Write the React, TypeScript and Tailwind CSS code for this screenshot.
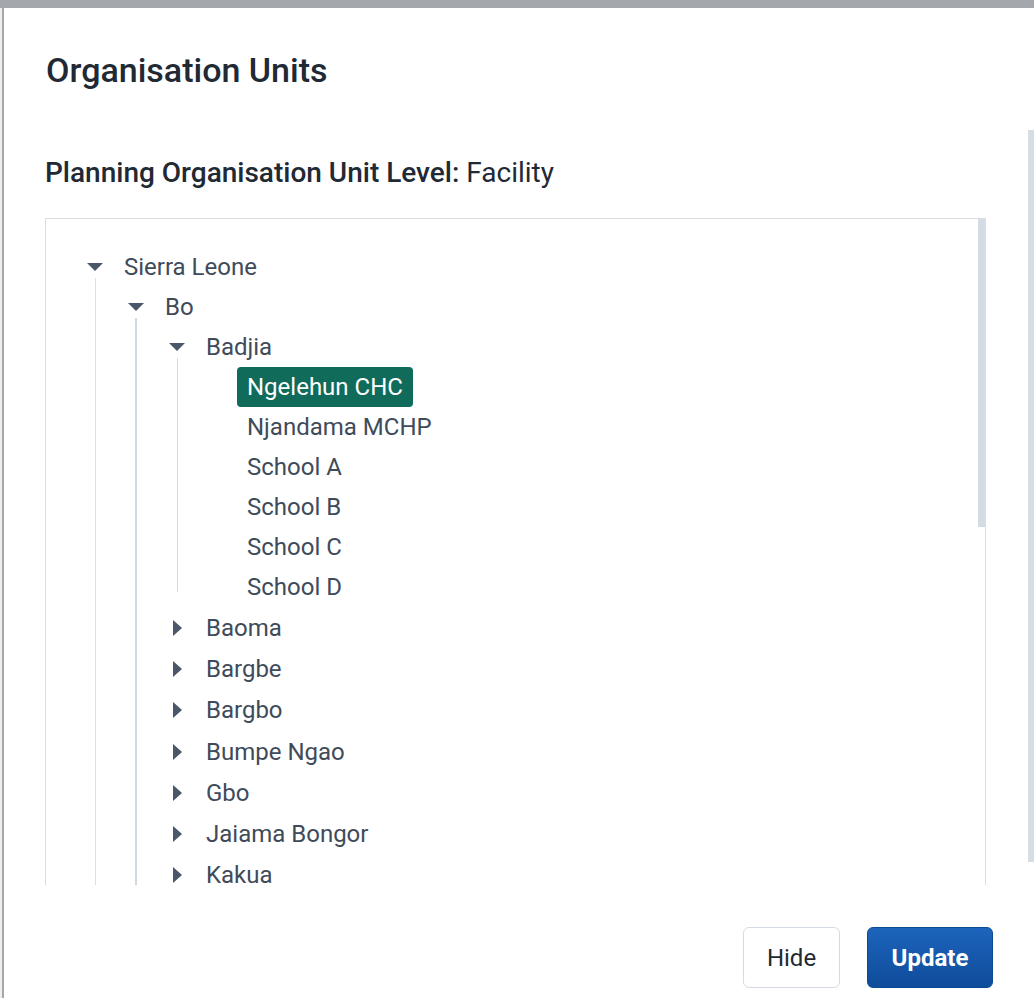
import React from "react";

type N = {
  label: string;
  open?: boolean;
  leaf?: boolean;
  selected?: boolean;
  line?: "a" | "b" | "c";
  children?: N[];
};

const tree: N = {
  label: "Sierra Leone",
  open: true,
  line: "a",
  children: [
    {
      label: "Bo",
      open: true,
      line: "b",
      children: [
        {
          label: "Badjia",
          open: true,
          line: "c",
          children: [
            { label: "Ngelehun CHC", leaf: true, selected: true },
            { label: "Njandama MCHP", leaf: true },
            { label: "School A", leaf: true },
            { label: "School B", leaf: true },
            { label: "School C", leaf: true },
            { label: "School D", leaf: true },
          ],
        },
        { label: "Baoma" },
        { label: "Bargbe" },
        { label: "Bargbo" },
        { label: "Bumpe Ngao" },
        { label: "Gbo" },
        { label: "Jaiama Bongor" },
        { label: "Kakua" },
      ],
    },
  ],
};

function Down() {
  return (
    <svg width="16" height="8" viewBox="0 0 16 8" className="block">
      <path d="M0 0 L16 0 L8 8 Z" fill="#4a5768" />
    </svg>
  );
}

function Right() {
  return (
    <svg width="9" height="16" viewBox="0 0 9 16" className="block">
      <path d="M0 0 L9 8 L0 16 Z" fill="#4a5768" />
    </svg>
  );
}

function Line({ kind }: { kind?: "a" | "b" | "c" }) {
  if (kind === "a") return <div className="mt-[7px] w-px flex-1 bg-[#d9e0e7]" />;
  if (kind === "b") return <div className="mt-[7px] w-[2px] flex-1 bg-[#d0d9e3]" />;
  return <div className="mt-[7px] mb-[15px] w-px flex-1 bg-[#d5dbe2]" />;
}

function Label({ node }: { node: N }) {
  if (node.selected) {
    return (
      <span className="ml-[7px] flex h-[40px] items-center rounded-[4px] bg-[#106b5a] px-[10px] text-[24px] text-white">
        {node.label}
      </span>
    );
  }
  return (
    <span className="ml-[7px] flex items-center px-[10px] text-[24px] text-[#404b5a]">
      {node.label}
    </span>
  );
}

function TreeNode({ node }: { node: N }) {
  if (node.open) {
    return (
      <div className="flex">
        <div className="flex w-[24px] shrink-0 flex-col items-center pt-[16px]">
          <Down />
          <Line kind={node.line} />
        </div>
        <div className="flex flex-col">
          <div className="flex h-[40px] items-center">
            <Label node={node} />
          </div>
          <div className="ml-[17px] flex flex-col">
            {node.children?.map((c) => (
              <TreeNode key={c.label} node={c} />
            ))}
          </div>
        </div>
      </div>
    );
  }
  if (node.leaf) {
    return (
      <div className="flex h-[40px] items-center">
        <div className="w-[24px] shrink-0" />
        <Label node={node} />
      </div>
    );
  }
  return (
    <div className="flex h-[41.3px] items-center">
      <div className="flex w-[24px] shrink-0 justify-center">
        <Right />
      </div>
      <Label node={node} />
    </div>
  );
}

export default function App() {
  return (
    <div
      className="flex h-[998px] w-[1034px] flex-col overflow-hidden bg-white"
      style={{ fontFamily: "Roboto, 'Noto Sans', sans-serif" }}
    >
      <div className="h-[8px] shrink-0 bg-[#a4a8ad]" />
      <div className="flex min-h-0 flex-1">
        <div className="w-[2px] shrink-0 bg-[#eeeeee]" />
        <div className="w-[2px] shrink-0 bg-[#a4a8ad]" />
        <div className="flex min-w-0 flex-1 flex-col bg-white">
          <div className="h-[112px] shrink-0 pl-[42px] pt-[42px]">
            <h1 className="text-[34px] font-medium leading-[40px] text-[#212934]">
              Organisation Units
            </h1>
          </div>
          <div className="flex h-[765px] shrink-0 overflow-hidden">
            <div className="flex min-w-0 flex-1 flex-col overflow-hidden pl-[41px] pr-[42px]">
              <p className="mt-[37px] h-[32px] shrink-0 text-[28px] leading-[32px] text-[#212934]">
                <span className="font-medium">Planning Organisation Unit Level:</span> Facility
              </p>
              <div className="mt-[29px] flex h-[1400px] shrink-0 border border-[#dedede]">
                <div className="flex-1 pl-[37px] pt-[28px]">
                  <TreeNode node={tree} />
                </div>
                <div className="w-[7px] shrink-0">
                  <div className="h-[308px] bg-[#d3dce5]" />
                </div>
              </div>
            </div>
            <div className="flex w-[6px] shrink-0 flex-col pb-[23px] pt-[10px]">
              <div className="flex-1 bg-[#d5dde5]" />
            </div>
          </div>
          <div className="flex flex-1 items-start justify-end gap-[27px] pr-[41px] pt-[42px]">
            <button className="flex h-[61px] w-[97px] items-center justify-center rounded-[6px] border border-[#d5dbe2] bg-white text-[24px] text-[#212934]">
              Hide
            </button>
            <button className="flex h-[61px] w-[126px] items-center justify-center rounded-[6px] border border-[#0d4a96] bg-gradient-to-b from-[#1d64bc] to-[#0f4c9a] text-[24px] font-bold text-white">
              Update
            </button>
          </div>
        </div>
      </div>
    </div>
  );
}
